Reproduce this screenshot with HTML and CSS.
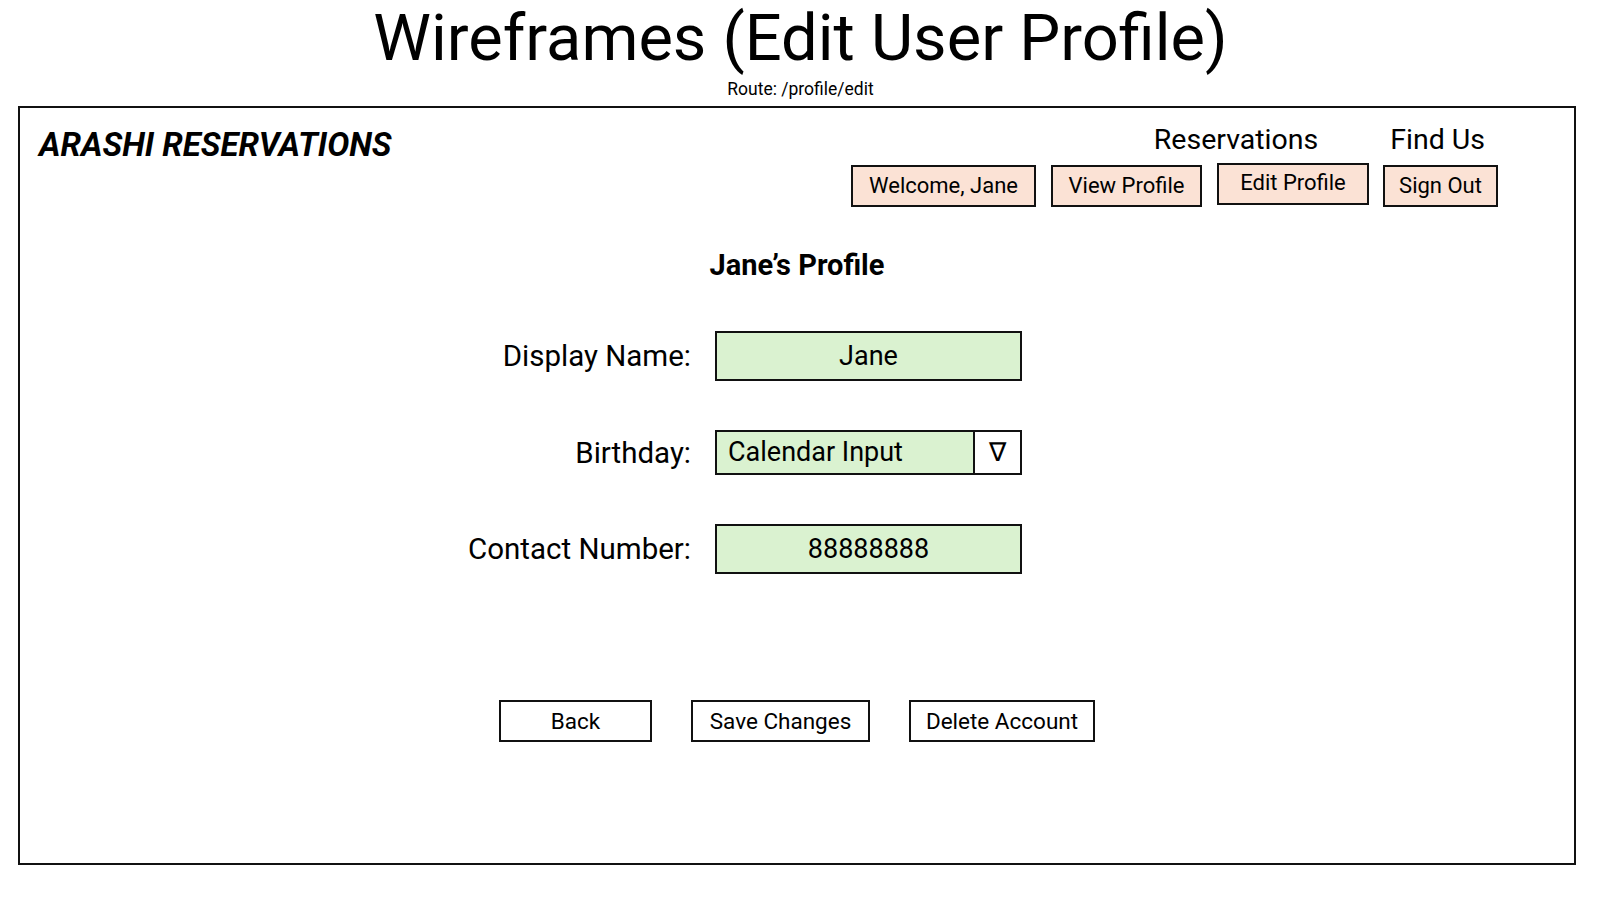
FILE: index.html
```html
<!DOCTYPE html>
<html lang="en">
    <head>
        <meta charset="UTF-8" />
        <meta name="viewport" content="width=device-width, initial-scale=1.0" />
        <title>Wireframes (Edit User Profile)</title>
        <link rel="stylesheet" href="styles.css">
    </head>
    <body>
        <div id="heading">
            <h1>Wireframes (Edit User Profile)</h1>
            <p class="route">Route: /profile/edit</p>
        </div>

        <div id="frame">
            <div class="topbar">
                <div class="logo">ARASHI RESERVATIONS</div>

                <div class="nav">
                    <div class="links">
                        <span>Reservations</span>
                        <span>Find Us</span>
                    </div>
                    <div class="tabs">
                        <div class="tab welcome">Welcome, Jane</div>
                        <div class="tab view">View Profile</div>
                        <div class="tab edit">Edit Profile</div>
                        <div class="tab signout">Sign Out</div>
                    </div>
                </div>
            </div>

            <h2 class="page-title">Jane’s Profile</h2>

            <div class="form">
                <label>Display Name:</label>
                <div class="field centered">Jane</div>

                <label>Birthday:</label>
                <div class="field date">
                    <span class="date-text">Calendar Input</span>
                    <span class="drop">∇</span>
                </div>

                <label>Contact Number:</label>
                <div class="field centered">88888888</div>
            </div>

            <div class="actions">
                <div class="btn back">Back</div>
                <div class="btn save">Save Changes</div>
                <div class="btn delete">Delete Account</div>
            </div>
        </div>
    </body>
</html>
```

FILE: styles.css
```css
* {
    margin: 0;
    padding: 0;
    box-sizing: border-box;
}

body {
    font-family: Roboto, "Liberation Sans", sans-serif;
    color: #000;
    background-color: #fff;
}

#heading {
    text-align: center;
    padding-left: 2px;
}

#heading h1 {
    font-weight: 400;
    font-size: 65px;
    line-height: 76px;
}

.route {
    font-size: 17.5px;
    line-height: 20px;
    margin-top: 3px;
}

#frame {
    width: 1558px;
    height: 759px;
    margin-left: 18px;
    margin-top: 7px;
    border: 2px solid #111;
}

.topbar {
    display: flex;
    justify-content: space-between;
    padding: 0 76px 0 19px;
}

.logo {
    font-weight: 700;
    font-style: italic;
    font-size: 33px;
    margin-top: 17px;
}

.nav {
    display: flex;
    flex-direction: column;
    align-items: flex-end;
}

.links {
    display: flex;
    gap: 72px;
    font-size: 28.5px;
    line-height: 34px;
    margin-top: 15px;
    padding-right: 13px;
}

.tabs {
    display: flex;
    align-items: flex-start;
    gap: 15px;
    margin-top: 8px;
}

.tab {
    height: 42px;
    border: 2px solid #111;
    background-color: #fbe2d5;
    font-size: 22px;
    line-height: 38px;
    text-align: center;
}

.welcome { width: 185px; }
.view { width: 151px; }
.edit { width: 152px; margin-top: -2px; line-height: 36px; }
.signout { width: 115px; margin-left: -1px; }

.page-title {
    text-align: center;
    font-size: 29px;
    font-weight: 700;
    line-height: 34px;
    margin-top: 41px;
}

.form {
    display: grid;
    grid-template-columns: 671px 307px;
    column-gap: 24px;
    row-gap: 49px;
    align-items: center;
    margin-top: 49px;
}

.form label {
    text-align: right;
    font-size: 29.5px;
}

.field {
    height: 50px;
    border: 2px solid #111;
    background-color: #daf2d0;
    font-size: 27px;
}

.centered {
    text-align: center;
    line-height: 46px;
}

.date {
    height: 45px;
    display: flex;
}

.date-text {
    flex: 1;
    padding-left: 11px;
    line-height: 41px;
}

.drop {
    width: 47px;
    border-left: 2px solid #111;
    background-color: #fff;
    text-align: center;
    line-height: 41px;
    font-size: 26px;
}

.actions {
    display: flex;
    justify-content: center;
    gap: 39px;
    margin-top: 126px;
}

.btn {
    height: 42px;
    border: 2px solid #111;
    font-size: 22.5px;
    line-height: 38px;
    text-align: center;
}

.back { width: 153px; }
.save { width: 179px; }
.delete { width: 186px; }
```
